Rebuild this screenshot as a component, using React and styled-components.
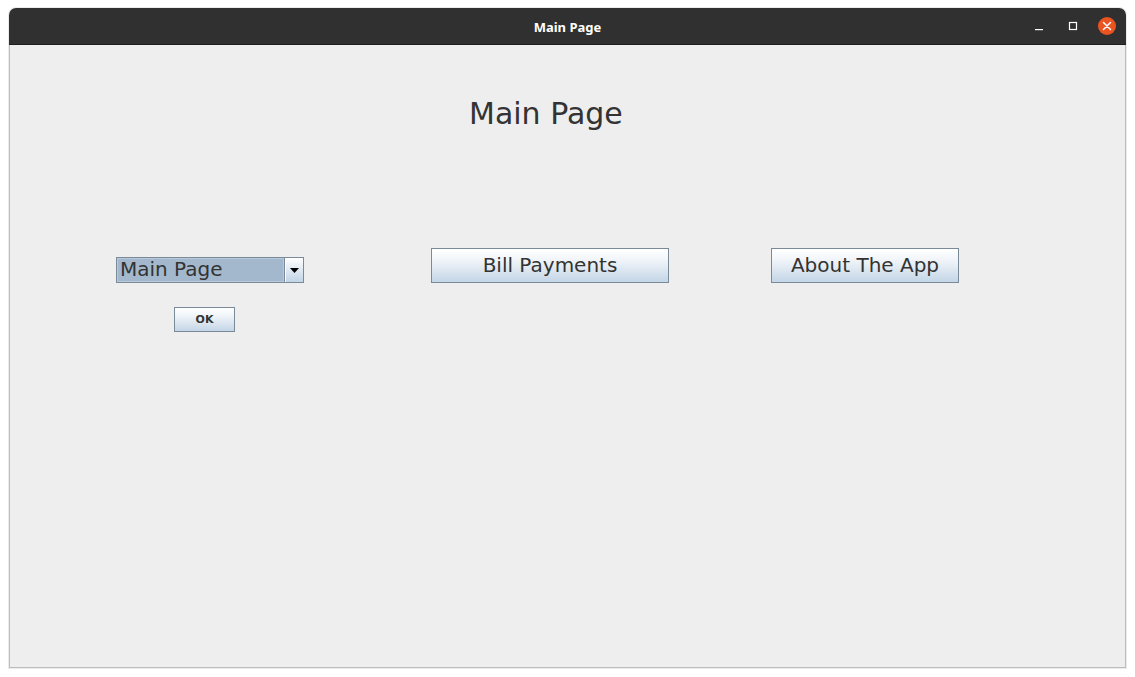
import React from 'react';
import styled, { createGlobalStyle } from 'styled-components';

const GlobalStyle = createGlobalStyle`
    html, body {
        margin: 0;
        padding: 0;
        background: #ffffff;
    }
    body {
        font-family: "DejaVu Sans", "Liberation Sans", sans-serif;
    }
`;

const Screen = styled.div`
    width: 1135px;
    height: 677px;
    padding: 8px 0 0 9px;
    box-sizing: border-box;
`;

const Window = styled.div`
    width: 1117px;
    height: 660px;
    display: flex;
    flex-direction: column;
    border-radius: 7px 7px 0 0;
    overflow: hidden;
    box-shadow: 0 0 0 1px rgba(0, 0, 0, 0.08);
`;

const TitleBar = styled.div`
    height: 37px;
    flex: none;
    background: #303030;
    border-bottom: 1px solid #1e1e1e;
    box-sizing: border-box;
    display: grid;
    grid-template-columns: 1fr auto 1fr;
    align-items: center;
`;

const TitleText = styled.div`
    grid-column: 2;
    color: #ffffff;
    font-family: "Noto Sans", "DejaVu Sans", sans-serif;
    font-weight: 700;
    font-size: 13px;
    padding-top: 1px;
`;

const WindowControls = styled.div`
    grid-column: 3;
    justify-self: end;
    display: flex;
    align-items: center;
    padding-right: 2px;
`;

const ControlButton = styled.div`
    width: 34px;
    height: 24px;
    display: flex;
    align-items: center;
    justify-content: center;
`;

const CloseCircle = styled.div`
    width: 18px;
    height: 18px;
    border-radius: 50%;
    background: #e95420;
    display: flex;
    align-items: center;
    justify-content: center;
`;

const Content = styled.div`
    flex: 1;
    background: #eeeeee;
    border: 1px solid #bdbdbd;
    border-top: none;
    display: flex;
    flex-direction: column;
`;

const Heading = styled.h1`
    margin: 51px 0 0 459px;
    font-size: 30px;
    line-height: 36px;
    font-weight: 400;
    color: #333333;
`;

const Row = styled.div`
    display: flex;
    align-items: flex-start;
    margin-top: 116px;
    padding-left: 106px;
`;

const LeftColumn = styled.div`
    display: flex;
    flex-direction: column;
    align-items: flex-start;
    padding-top: 9px;
    margin-right: 127px;
`;

const Combo = styled.div`
    width: 188px;
    height: 26px;
    box-sizing: border-box;
    border: 1px solid #7a8a99;
    display: flex;
    background: #eeeeee;
`;

const ComboValue = styled.div`
    flex: 1;
    background: #a3b8cc;
    border: 1px solid #b8c9da;
    box-sizing: border-box;
    color: #333333;
    font-size: 20px;
    line-height: 20px;
    padding-left: 2px;
    white-space: nowrap;
`;

const ComboArrow = styled.div`
    width: 19px;
    box-sizing: border-box;
    border-left: 1px solid #7a8a99;
    box-shadow: inset 1px 1px 0 #ffffff;
    background: linear-gradient(#ffffff 0%, #e3ebf4 45%, #c2d4e6 100%);
    display: flex;
    align-items: center;
    justify-content: center;
    padding-top: 1px;
`;

const Button = styled.button`
    width: ${p => p.$w}px;
    height: ${p => p.$h}px;
    margin: ${p => p.$m || '0'};
    box-sizing: border-box;
    border: 1px solid #7a8a99;
    border-radius: 0;
    padding: 0 0 ${p => (p.$bold ? 0 : 2)}px;
    background: linear-gradient(#ffffff 0%, #f2f6fa 30%, #dce6f0 65%, #c3d5e7 100%);
    color: #333333;
    font-family: "DejaVu Sans", "Liberation Sans", sans-serif;
    font-size: ${p => p.$fs}px;
    font-weight: ${p => (p.$bold ? 700 : 400)};
    display: flex;
    align-items: center;
    justify-content: center;
    cursor: default;
`;

const App = () => {
    return (
        <>
            <GlobalStyle />
            <Screen>
                <Window>
                    <TitleBar>
                        <TitleText>Main Page</TitleText>
                        <WindowControls>
                            <ControlButton>
                                <svg width="10" height="10" viewBox="0 0 10 10">
                                    <rect x="1" y="8" width="8" height="1.2" fill="#ffffff" />
                                </svg>
                            </ControlButton>
                            <ControlButton>
                                <svg width="10" height="10" viewBox="0 0 10 10">
                                    <rect x="1.5" y="1.5" width="7" height="7" fill="none" stroke="#ffffff" strokeWidth="1.2" />
                                </svg>
                            </ControlButton>
                            <ControlButton>
                                <CloseCircle>
                                    <svg width="10" height="10" viewBox="0 0 10 10">
                                        <path d="M1.5 1.5 L8.5 8.5 M8.5 1.5 L1.5 8.5" stroke="#ffffff" strokeWidth="1.5" strokeLinecap="round" />
                                    </svg>
                                </CloseCircle>
                            </ControlButton>
                        </WindowControls>
                    </TitleBar>
                    <Content>
                        <Heading>Main Page</Heading>
                        <Row>
                            <LeftColumn>
                                <Combo>
                                    <ComboValue>Main Page</ComboValue>
                                    <ComboArrow>
                                        <svg width="9" height="5" viewBox="0 0 9 5">
                                            <path d="M0 0 H9 L4.5 5 Z" fill="#000000" />
                                        </svg>
                                    </ComboArrow>
                                </Combo>
                                <Button $w={61} $h={25} $fs={11} $bold $m="24px 0 0 58px">OK</Button>
                            </LeftColumn>
                            <Button $w={238} $h={35} $fs={20} $m="0 102px 0 0">Bill Payments</Button>
                            <Button $w={188} $h={35} $fs={20}>About The App</Button>
                        </Row>
                    </Content>
                </Window>
            </Screen>
        </>
    );
};

export default App;
